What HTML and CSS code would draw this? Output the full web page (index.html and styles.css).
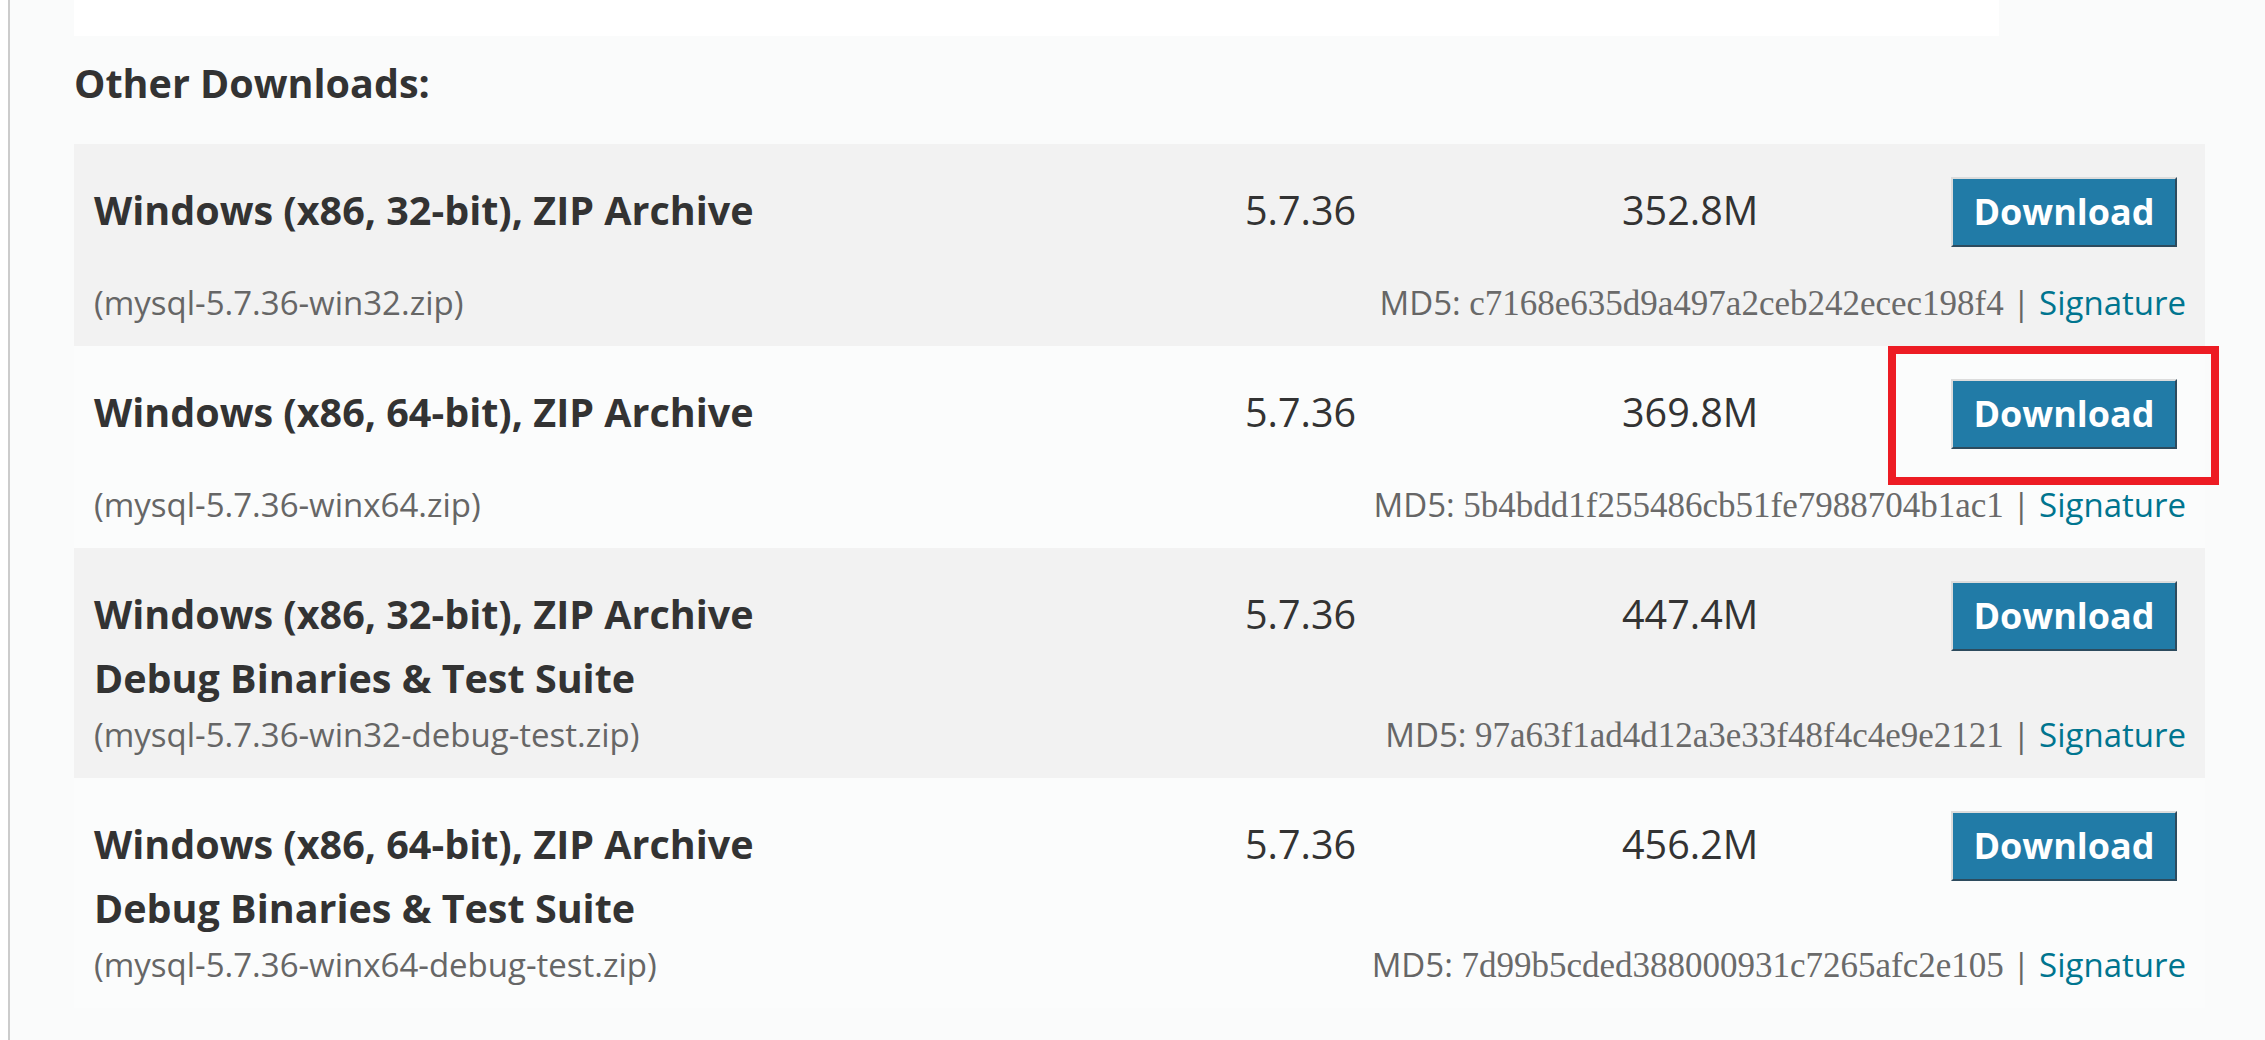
FILE: index.html
```html
<!DOCTYPE html>
<html>
<head>
<meta charset="utf-8">
<title>Other Downloads</title>
<link rel="stylesheet" href="styles.css">
</head>
<body>
<div class="page">
  <div class="panel-end"></div>
  <h3 class="heading">Other Downloads:</h3>
  <div class="table">
    <div class="row odd">
      <div class="top">
        <div class="name">Windows (x86, 32-bit), ZIP Archive</div>
        <div class="ver">5.7.36</div>
        <div class="size">352.8M</div>
        <div class="btn-cell"><button class="btn">Download</button></div>
      </div>
      <div class="bottom">
        <div class="file">(mysql-5.7.36-win32.zip)</div>
        <div class="md5">MD5: <code class="hash">c7168e635d9a497a2ceb242ecec198f4</code> <span class="sep">|</span> <a class="sig">Signature</a></div>
      </div>
    </div>
    <div class="row even">
      <div class="top">
        <div class="name">Windows (x86, 64-bit), ZIP Archive</div>
        <div class="ver">5.7.36</div>
        <div class="size">369.8M</div>
        <div class="btn-cell"><button class="btn">Download</button></div>
      </div>
      <div class="bottom">
        <div class="file">(mysql-5.7.36-winx64.zip)</div>
        <div class="md5">MD5: <code class="hash">5b4bdd1f255486cb51fe7988704b1ac1</code> <span class="sep">|</span> <a class="sig">Signature</a></div>
      </div>
      <div class="highlight"></div>
    </div>
    <div class="row odd">
      <div class="top">
        <div class="name">Windows (x86, 32-bit), ZIP Archive<br>Debug Binaries &amp; Test Suite</div>
        <div class="ver">5.7.36</div>
        <div class="size">447.4M</div>
        <div class="btn-cell"><button class="btn">Download</button></div>
      </div>
      <div class="bottom">
        <div class="file">(mysql-5.7.36-win32-debug-test.zip)</div>
        <div class="md5">MD5: <code class="hash">97a63f1ad4d12a3e33f48f4c4e9e2121</code> <span class="sep">|</span> <a class="sig">Signature</a></div>
      </div>
    </div>
    <div class="row even">
      <div class="top">
        <div class="name">Windows (x86, 64-bit), ZIP Archive<br>Debug Binaries &amp; Test Suite</div>
        <div class="ver">5.7.36</div>
        <div class="size">456.2M</div>
        <div class="btn-cell"><button class="btn">Download</button></div>
      </div>
      <div class="bottom">
        <div class="file">(mysql-5.7.36-winx64-debug-test.zip)</div>
        <div class="md5">MD5: <code class="hash">7d99b5cded388000931c7265afc2e105</code> <span class="sep">|</span> <a class="sig">Signature</a></div>
      </div>
    </div>
  </div>
</div>
</body>
</html>
```
FILE: styles.css
```css
html, body {
  margin: 0;
  padding: 0;
  background: #ffffff;
  height: 100%;
  overflow: hidden;
}
body {
  font-family: "Open Sans", "Liberation Sans", sans-serif;
  color: #333333;
}
.page {
  margin-left: 8px;
  border-left: 2px solid #cccccc;
  background: #fafbfb;
  min-height: 1040px;
  padding-left: 64px;
  box-sizing: border-box;
}
.panel-end {
  width: 1925px;
  height: 36px;
  background: #ffffff;
}
.heading {
  margin: 22px 0 36px 0;
  font-size: 39.5px;
  line-height: 50px;
  font-weight: 700;
  color: #333333;
}
.table {
  width: 2131px;
}
.row {
  position: relative;
  padding: 33px 19px 16px 20px;
}
.row.odd {
  background: #f2f2f2;
}
.row.even {
  background: #fbfcfc;
}
.top {
  display: grid;
  grid-template-columns: 1151px 377px 329px 1fr;
  align-items: start;
}
.name {
  margin-top: 1px;
  margin-bottom: -2px;
  font-size: 39.5px;
  line-height: 64px;
  font-weight: 700;
  color: #333333;
}
.ver, .size {
  margin-top: 1px;
  font-size: 39.5px;
  line-height: 64px;
  color: #333333;
}
.btn-cell {
  height: 99px;
}
.btn {
  display: block;
  width: 226px;
  height: 70px;
  padding: 0;
  margin: 0;
  background: #217ba7;
  color: #ffffff;
  font-family: "Open Sans", "Liberation Sans", sans-serif;
  font-size: 36px;
  font-weight: 700;
  line-height: 64px;
  border-style: solid;
  border-width: 2px;
  border-color: #dcdcdc #2d4b5e #2d4b5e #dcdcdc;
  text-align: center;
}
.bottom {
  display: flex;
  justify-content: space-between;
  align-items: baseline;
  height: 54px;
  line-height: 54px;
}
.file {
  font-size: 33px;
  color: #666666;
}
.md5 {
  font-size: 33px;
  color: #666666;
  white-space: nowrap;
}
.hash {
  font-family: "Liberation Serif", serif;
  font-size: 35px;
  color: #6a6a6a;
}
.sep {
  color: #666666;
}
.sig {
  color: #00758f;
  text-decoration: none;
}
.highlight {
  position: absolute;
  left: 1814px;
  top: 0;
  width: 331px;
  height: 139px;
  border: 8px solid #ed1c24;
  box-sizing: border-box;
}
```
